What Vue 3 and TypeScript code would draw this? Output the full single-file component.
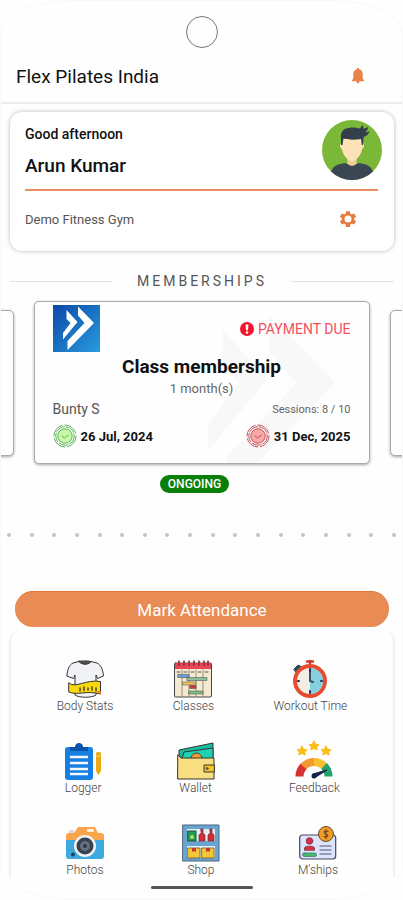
<script setup lang="ts">
interface MenuItem {
  id: string
  label: string
}

const menuRows: MenuItem[][] = [
  [
    { id: 'stats', label: 'Body Stats' },
    { id: 'classes', label: 'Classes' },
    { id: 'time', label: 'Workout Time' },
  ],
  [
    { id: 'logger', label: 'Logger' },
    { id: 'wallet', label: 'Wallet' },
    { id: 'feedback', label: 'Feedback' },
  ],
  [
    { id: 'photos', label: 'Photos' },
    { id: 'shop', label: 'Shop' },
    { id: 'mships', label: "M'ships" },
  ],
]

const chevronSmall = 'M13.500 5L24.500 17L10 34.500V28L17.500 18L13.500 14Z'
const chevronLarge = 'M25 1.500L41 18L14.500 45V36L31.500 18L25 10.500Z'
</script>

<template>
  <div class="page">
    <div class="camera"></div>

    <header class="topbar">
      <h1>Flex Pilates India</h1>
      <button class="icon-btn" type="button" aria-label="Notifications">
        <svg class="bell" width="14" height="18" viewBox="0 0 14 18">
          <path d="M7 1C6.200 1 5.700 1.500 5.700 2.300C3.500 2.900 2.300 4.600 2.300 7V11.500L.8 13.400V14.200H13.200V13.400L11.700 11.500V7C11.700 4.600 10.500 2.900 8.300 2.300C8.300 1.500 7.800 1 7 1Z" />
          <path d="M5.500 14H8.500C8.500 15.600 7.900 16.400 7 16.400S5.500 15.600 5.500 14Z" />
        </svg>
      </button>
    </header>

    <main>
      <section class="profile">
        <div class="profile-top">
          <div>
            <p class="greeting">Good afternoon</p>
            <p class="name">Arun Kumar</p>
          </div>
          <svg class="avatar" width="60" height="60" viewBox="0 0 60 60">
            <defs>
              <clipPath id="face-clip"><circle cx="30" cy="30" r="30" /></clipPath>
            </defs>
            <g clip-path="url(#face-clip)">
              <rect width="60" height="60" fill="#7cb837" />
              <path d="M8 60C8 48 12 44.500 23 43L30 46L37 43C48 44.500 52 48 52 60Z" fill="#3b4654" />
              <path d="M25.500 36H34.500V43C33.500 46.500 26.500 46.500 25.500 43Z" fill="#efcd98" />
              <path d="M19.500 17H40.500V23.500C42.500 23 42.500 28 40.200 29C39 35 34.500 41 30 41S21 35 19.800 29C17.500 28 17.500 23 19.500 23.500Z" fill="#fce2b6" />
              <path d="M19 25V18C18 12 22 8 27 8C31 7 35 8 37 8.500C38.500 8 40 6.500 40 5C41.500 6 41.500 7.500 41 8.500C43.500 8.500 45 7.500 45.500 6.500C46.500 9 45 11 43.500 12C45 12.500 46.500 12 47.500 11C47 14.500 43.500 16.500 41.500 17L41 25H39.800L39 19C33 20 26 20 21.500 18.500L20.500 25Z" fill="#343f4d" />
            </g>
          </svg>
        </div>
        <div class="profile-bottom">
          <span>Demo Fitness Gym</span>
          <button class="icon-btn" type="button" aria-label="Settings">
            <svg width="18" height="18" viewBox="0 0 24 24">
              <path fill="#e8793a" fill-rule="evenodd" d="M9.500 1.500H14.500L15.100 4.800L17 5.900L20.200 4.700L22.700 9L20.100 11.100V12.900L22.700 15L20.200 19.300L17 18.100L15.100 19.200L14.500 22.500H9.500L8.900 19.200L7 18.100L3.800 19.300L1.300 15L3.900 12.900V11.100L1.300 9L3.800 4.700L7 5.900L8.900 4.800ZM12 7.300A4.700 4.700 0 1 0 12 16.700A4.700 4.700 0 1 0 12 7.300Z" />
            </svg>
          </button>
        </div>
      </section>

      <h2 class="section-title">MEMBERSHIPS</h2>

      <section class="carousel">
        <div class="side-card"></div>
        <article class="member-card">
          <svg class="watermark" width="193" height="193" viewBox="0 0 47 47">
            <path :d="chevronSmall" />
            <path :d="chevronLarge" />
          </svg>
          <div class="row card-head">
            <svg width="47" height="47" viewBox="0 0 47 47">
              <defs>
                <linearGradient id="logo-bg" x1="0" y1="0" x2="1" y2="1">
                  <stop offset="0" stop-color="#0c49a8" />
                  <stop offset="1" stop-color="#299add" />
                </linearGradient>
              </defs>
              <rect width="47" height="47" fill="url(#logo-bg)" />
              <path :d="chevronSmall" fill="#fff" />
              <path :d="chevronLarge" fill="#fff" />
            </svg>
            <span class="due">
              <svg width="14" height="14" viewBox="0 0 14 14">
                <circle cx="7" cy="7" r="7" fill="#f5142e" />
                <path d="M5.600 2.600H8.400L8 8.300H6Z" fill="#fff" />
                <circle cx="7" cy="10.500" r="1.300" fill="#fff" />
              </svg>
              PAYMENT DUE
            </span>
          </div>
          <h3>Class membership</h3>
          <p class="duration">1 month(s)</p>
          <div class="row">
            <span class="holder">Bunty S</span>
            <span class="sessions">Sessions: 8 / 10</span>
          </div>
          <div class="row dates">
            <span class="date">
              <svg class="seal start" width="24" height="24" viewBox="0 0 24 24">
                <circle class="ring" cx="12" cy="12" r="11" stroke-dasharray="15 2" />
                <circle class="ring" cx="12" cy="12" r="9.200" stroke-dasharray="10 1" />
                <circle class="core" cx="12" cy="12" r="7.200" />
                <path class="tick" d="M8.500 11.500L11.500 14L15.500 11" />
              </svg>
              26 Jul, 2024
            </span>
            <span class="date">
              <svg class="seal end" width="24" height="24" viewBox="0 0 24 24">
                <circle class="ring" cx="12" cy="12" r="11" stroke-dasharray="15 2" />
                <circle class="ring" cx="12" cy="12" r="9.200" stroke-dasharray="10 1" />
                <circle class="core" cx="12" cy="12" r="7.200" />
                <path class="tick" d="M8.500 11.500L11.500 14L15.500 11" />
              </svg>
              31 Dec, 2025
            </span>
          </div>
        </article>
        <div class="side-card"></div>
      </section>

      <div class="status-row"><span class="status">ONGOING</span></div>

      <div class="dots"><i v-for="n in 18" :key="n"></i></div>

      <button class="attend" type="button">Mark Attendance</button>

      <nav class="menu">
        <div v-for="(row, index) in menuRows" :key="index" class="menu-row">
          <a v-for="item in row" :key="item.id" href="#" class="menu-item">
            <svg width="38" height="38" viewBox="0 0 38 38" stroke-linejoin="round" stroke-linecap="round">
              <g v-if="item.id === 'stats'" stroke="#333" stroke-width="1">
                <path d="M13 1.500L7 3C3 5 1.500 10 .8 16L7.500 18.500L9 15V35C13 38 26 38 30 35V15L31.500 18.500L37.500 16C37 10 35 5 31 3L25 1.500C22 5 16 5 13 1.500Z" fill="#f1f2f5" />
                <path d="M13 1.500C16 5 22 5 25 1.500L22 1H16Z" fill="#555" />
                <path d="M3 23C9 29 20 19 34.500 21.500V34C20 30 11 36 3 32Z" fill="#f9d90c" />
                <path d="M14 31V28M18 30.500V27M22 30V28M26 30V27M30 31V28" fill="none" stroke-width="1.300" />
                <path d="M31 31H35V35Z" fill="#e8792b" stroke="none" />
              </g>

              <g v-else-if="item.id === 'classes'">
                <rect x=".5" y="3" width="37" height="34" rx="1" fill="#f5ead1" stroke="#444" />
                <path d="M1 3H37V9H1Z" fill="#e54756" />
                <path d="M5 1V5M10 1V5M15 1V5M20 1V5M25 1V5M30 1V5M34 1V5" stroke="#8c202f" stroke-width="1.500" />
                <path d="M8 10V36M15 10V36M22 10V36M29 10V36" stroke="#9a8d78" stroke-width="1" />
                <path d="M3 12H6M10 12H13M17 12H20M24 12H27M31 12H34" stroke="#555" stroke-width="1" />
                <g stroke="#444" stroke-width=".5">
                  <rect x="4" y="14.500" width="11" height="3" fill="#6f9cdb" />
                  <rect x="13" y="17.500" width="20" height="3" fill="#8cbf9b" />
                  <rect x="9" y="22" width="13" height="3" fill="#f2c45c" />
                  <rect x="16" y="25.500" width="6" height="3" fill="#cc3444" />
                  <rect x="15" y="31" width="14" height="3" fill="#7cc187" />
                </g>
              </g>

              <g v-else-if="item.id === 'time'">
                <path d="M16 1.500H22M19 1V6" stroke="#cf3b2e" stroke-width="2.500" />
                <path d="M3 9L7 5L11 7L5 12Z" fill="#234a5f" stroke="#234a5f" />
                <circle cx="19" cy="21" r="17" fill="#e64c31" />
                <circle cx="19" cy="21" r="13" fill="#f3eee3" />
                <path d="M19 8A13 13 0 0 1 19 34Z" fill="#86cfdf" />
                <path d="M19 9V12M19 31V33M7 21H8M30 21H31" stroke="#27345a" stroke-width="2" />
                <path d="M19 13V21L22 22" fill="none" stroke="#2f5965" stroke-width="2" />
              </g>

              <g v-else-if="item.id === 'logger'">
                <rect x="1" y="5" width="28" height="33" rx="3" fill="#167fe1" />
                <path d="M6 9V5H11C11 -.5 19 -.5 19 5H24V9Z" fill="#0755aa" />
                <path d="M6 15H24M6 21H24M6 27H24M6 32H24" stroke="#f5f8ff" stroke-width="2.500" stroke-linecap="butt" />
                <path d="M32 12C32 9 37 9 37 12V29L34.500 33L32 29Z" fill="#eda914" />
                <path d="M32 14H37" stroke="#f7cf59" stroke-width="1" />
              </g>

              <g v-else-if="item.id === 'wallet'" stroke="#333" stroke-width="1">
                <path d="M2 16V8L36 1V17Z" fill="#16bda0" />
                <path d="M5 16L7 10L36 6V18Z" fill="#20d1b4" />
                <path d="M14 17C14 9 25 9 25 17Z" fill="#f09b35" />
                <path d="M1 13L4 16H37V37H1Z" fill="#f9df82" />
                <path d="M37 23H27V30H37Z" fill="#f3c623" />
                <circle cx="30" cy="26.500" r="1" fill="#fff" />
              </g>

              <g v-else-if="item.id === 'feedback'">
                <path id="star" d="M19 -1L20.700 2.200L24 2.700L21.600 5L22.200 8L19 6.500L15.800 8L16.400 5L14 2.700L17.300 2.200Z" fill="#fbbd18" stroke="#fbbd18" stroke-width="1" />
                <use href="#star" x="-12" y="5" />
                <use href="#star" x="12" y="5" />
                <path d="M4.500 34.500A14.500 14.500 0 0 1 9 24" stroke="#d83232" fill="none" stroke-width="8" stroke-linecap="butt" />
                <path d="M8.500 24.500A14.500 14.500 0 0 1 19 20" stroke="#f29a31" fill="none" stroke-width="8" stroke-linecap="butt" />
                <path d="M19 20A14.500 14.500 0 0 1 29.500 24.500" stroke="#f9bf2e" fill="none" stroke-width="8" stroke-linecap="butt" />
                <path d="M29 24A14.500 14.500 0 0 1 33.500 34.500" stroke="#23a269" fill="none" stroke-width="8" stroke-linecap="butt" />
                <path d="M18 32L32 28L20 35.500Z" fill="#14204c" stroke="#14204c" />
                <circle cx="19" cy="34" r="2.500" fill="#14204c" />
              </g>

              <g v-else-if="item.id === 'photos'">
                <path d="M3 9V6H8V9" fill="#ded8dc" />
                <path d="M0 17V12C0 10 1 9 3 9H8L12 3H29L32 9H35C37 9 38 10 38 12V17Z" fill="#faa44c" />
                <path d="M0 16H38V32C38 34 37 35 35 35H3C1 35 0 34 0 32Z" fill="#3da9de" />
                <rect x="21" y="5" width="7" height="3" rx="1" fill="#fff0d5" />
                <circle cx="19" cy="22" r="11" fill="#f0f1f2" />
                <circle cx="19" cy="22" r="8.500" fill="#38424e" />
                <circle cx="19" cy="22" r="5" fill="#65717e" />
                <circle cx="19" cy="22" r="2" fill="#2f3943" />
                <circle cx="7" cy="30.500" r="2" fill="#1d435c" />
              </g>

              <g v-else-if="item.id === 'shop'">
                <rect x="1" y="1" width="36" height="36" fill="#69a5d0" stroke="#49677d" stroke-width="1" />
                <path d="M5 5H33V17H5ZM5 22H33V34H5Z" fill="#e1edf5" />
                <path d="M6 7H14V17H6Z" fill="#1d9c58" stroke="#24523c" />
                <circle cx="10" cy="13" r="2" fill="#b4dc54" />
                <path d="M19 5H21V9L23 11V17H17V11L19 9ZM28 5H30V9L32 11V17H26V11L28 9Z" fill="#cf3037" stroke="#762831" stroke-width=".7" />
                <path d="M6 24H18V34H6ZM20 24H32V34H20Z" fill="#f5c737" stroke="#755c29" stroke-width=".8" />
                <path d="M10 24H14V28L12 27L10 28ZM24 24H28V28L26 27L24 28Z" fill="#c8352e" />
              </g>

              <g v-else>
                <rect x=".7" y="11" width="36" height="24" rx="3" fill="#dce3fa" stroke="#47475b" stroke-width="1.200" />
                <circle cx="10.500" cy="17" r="3.300" fill="#d92f40" stroke="#6c2735" stroke-width=".7" />
                <path d="M5.500 26V24C5.500 21.500 15.500 21.500 15.500 24V26Z" fill="#d92f40" stroke="#6c2735" stroke-width=".7" />
                <rect x="3.500" y="29" width="14" height="3.500" rx="1.700" fill="#46b873" stroke="#397556" stroke-width=".7" />
                <path d="M21 22H32M21 26H32M21 30H32" stroke="#535671" stroke-width="1.200" />
                <circle cx="27" cy="10" r="7.500" fill="#ef9c26" stroke="#704a27" stroke-width="1" />
                <path d="M29 7.500C25 5.500 24 9 27 10S29 14 25 12.500M27 5.500V14.500" fill="none" stroke="#704a27" stroke-width="1.200" />
              </g>
            </svg>
            <span>{{ item.label }}</span>
          </a>
        </div>
      </nav>
    </main>

    <div class="home-bar"></div>
  </div>
</template>

<style>
body {
  margin: 0;
  background: #fefefe;
}
</style>

<style scoped>
* {
  box-sizing: border-box;
}

.page {
  position: relative;
  display: flex;
  flex-direction: column;
  min-height: 100vh;
  overflow: hidden;
  font-family: Roboto, "Liberation Sans", sans-serif;
  color: #111;
}

/* faint device outline */
.page::before {
  content: "";
  position: absolute;
  inset: 0;
  border: 1px solid #f8f8f8;
  border-radius: 72px / 34px;
  pointer-events: none;
}

.camera {
  width: 32px;
  height: 32px;
  margin: 16px auto 0;
  border: 1px solid #777;
  border-radius: 50%;
}

h1,
h2,
h3,
p {
  margin: 0;
}

button {
  font-family: inherit;
  cursor: pointer;
}

.topbar {
  display: flex;
  justify-content: space-between;
  align-items: center;
  height: 56px;
  padding: 2px 36px 0 16px;
  border-bottom: 2px solid #ebebeb;
}

h1 {
  font-size: 19px;
  font-weight: 400;
}

.icon-btn {
  display: flex;
  padding: 0;
  border: 0;
  background: none;
}

.bell {
  width: 18px;
  fill: #e8834a;
}

.profile {
  margin: 8px 9px 0 10px;
  padding: 8px 16px 0 15px;
  height: 139px;
  border-radius: 12px;
  background: #fff;
  box-shadow: 0 0 4px rgba(0, 0, 0, 0.28);
}

.profile-top {
  display: flex;
  justify-content: space-between;
  height: 71px;
  border-bottom: 2px solid #ea8f63;
}

.greeting {
  padding-top: 5px;
  font-size: 14px;
  line-height: 18px;
  font-weight: 500;
}

.name {
  margin-top: 12px;
  font-size: 19px;
  line-height: 22px;
  font-weight: 500;
}

.avatar {
  margin-right: -4px;
}

.profile-bottom {
  display: flex;
  justify-content: space-between;
  align-items: center;
  height: 56px;
  padding-right: 21px;
  font-size: 13px;
  color: #555;
}

.section-title {
  display: flex;
  align-items: center;
  gap: 24px;
  margin: 20px 9px 0 10px;
  font-size: 14px;
  line-height: 20px;
  font-weight: 400;
  letter-spacing: 3px;
  color: #555;
}

.section-title::before,
.section-title::after {
  content: "";
  flex: 1;
  height: 1px;
  background: #e4e4e4;
}

.carousel {
  display: flex;
  justify-content: center;
  align-items: center;
  gap: 20px;
  height: 171px;
  overflow: hidden;
  margin-top: 6px;
}

.side-card,
.member-card {
  flex: 0 0 calc(100% - 67px);
  border: 1px solid #aaa;
  border-radius: 5px;
  background: #fefefe;
  box-shadow: 0 1px 3px rgba(0, 0, 0, 0.35);
}

.side-card {
  height: 146px;
}

.member-card {
  position: relative;
  height: 163px;
  padding: 3px 18px 0;
  overflow: hidden;
}

.member-card > * {
  position: relative;
}

.member-card > .watermark {
  position: absolute;
  right: 9px;
  top: 7px;
  fill: #f8f8f9;
}

.row {
  display: flex;
  justify-content: space-between;
  align-items: center;
}

.card-head {
  height: 47px;
}

.due {
  display: flex;
  align-items: center;
  gap: 4px;
  font-size: 14px;
  color: #f3505e;
}

h3 {
  margin-top: 3px;
  text-align: center;
  font-size: 19px;
  line-height: 24px;
  font-weight: 700;
}

.duration {
  text-align: center;
  font-size: 13px;
  line-height: 20px;
  color: #666;
}

.holder {
  font-size: 14px;
  line-height: 20px;
  color: #555;
}

.sessions {
  font-size: 11px;
  color: #666;
}

.dates {
  margin-top: 5px;
}

.date {
  display: flex;
  align-items: center;
  gap: 4px;
  font-size: 13px;
  font-weight: 700;
}

.seal {
  fill: none;
}

.start {
  stroke: #58b45c;
}

.start .core {
  fill: #c9f7a5;
}

.end {
  stroke: #c8525a;
}

.end .core {
  fill: #f9a8a8;
}

.status-row {
  display: flex;
  justify-content: center;
  margin-top: 7px;
  padding-right: 14px;
}

.status {
  padding: 0 8px;
  border-radius: 10px;
  background: #0a800a;
  color: #fff;
  font-size: 12px;
  line-height: 18px;
  font-weight: 500;
}

.dots {
  display: flex;
  justify-content: space-between;
  margin: 40px 7px 0;
}

.dots i {
  width: 4px;
  height: 4px;
  border-radius: 50%;
  background: #c4c4c4;
}

.attend {
  display: block;
  width: calc(100% - 29px);
  height: 36px;
  margin: 54px 14px 0 15px;
  padding: 0;
  border: 0;
  border-top: 1px solid #df7837;
  border-radius: 18px;
  background: #e88b54;
  color: #fff;
  font-size: 17px;
}

.menu {
  display: flex;
  flex-direction: column;
  gap: 28px;
  margin: 3px 8px 0 9px;
  padding: 30px 16px 0;
  border: 2px solid #f1f1f1;
  border-width: 0 2px;
  border-radius: 12px 12px 0 0;
}

.menu-row {
  display: flex;
  justify-content: space-around;
}

.menu-item {
  display: flex;
  flex-direction: column;
  align-items: center;
  color: #444;
  font-size: 12px;
  font-weight: 300;
  line-height: 16px;
  text-decoration: none;
}

.menu-item svg {
  overflow: visible;
}

.home-bar {
  width: 102px;
  height: 3px;
  margin: 8px auto 10px;
  border-radius: 2px;
  background: #555;
}
</style>
